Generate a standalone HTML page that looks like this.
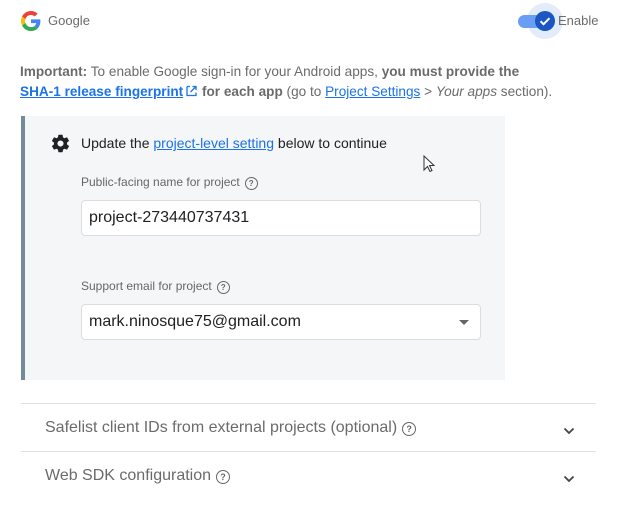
<!DOCTYPE html>
<html><head><meta charset="utf-8"><style>
body{margin:0;width:638px;height:510px;background:#fff;font-family:"Liberation Sans",sans-serif;position:relative;overflow:hidden}
.a{position:absolute;white-space:nowrap}
a{color:#1a73e8;text-decoration:underline}
.help{display:inline-block;width:11px;height:11px;border:1.3px solid #666;border-radius:50%;font-size:8px;line-height:11px;text-align:center;color:#666;vertical-align:0px;margin-left:5px;font-weight:bold}
.inp{position:absolute;left:81px;width:398px;height:34px;background:#fff;border:1px solid #dadce0;border-radius:4px;font-size:16px;color:#202124;line-height:34px;text-indent:7px}
.hr{position:absolute;left:21px;width:575px;height:1px;background:#e0e0e0}
.acc{position:absolute;left:45px;font-size:16px;color:#6b6b6b}
.chev{position:absolute;left:563px;width:12px;height:8px}
</style></head><body>
<svg class="a" style="left:21px;top:11px" width="20" height="20" viewBox="0 0 48 48"><path fill="#EA4335" d="M24 9.5c3.5 0 6.6 1.2 9.1 3.6l6.8-6.8C35.8 2.4 30.3 0 24 0 14.6 0 6.6 5.4 2.6 13.3l7.9 6.1C12.4 13.7 17.7 9.5 24 9.5z"/><path fill="#4285F4" d="M46.5 24.5c0-1.6-.1-3.1-.4-4.5H24v9h12.7c-.6 2.9-2.2 5.4-4.7 7.1l7.6 5.9c4.4-4.1 6.9-10.1 6.9-17.5z"/><path fill="#FBBC05" d="M10.5 28.6c-.5-1.4-.8-3-.8-4.6s.3-3.2.8-4.6l-7.9-6.1C.9 16.5 0 20.1 0 24s.9 7.5 2.6 10.7l7.9-6.1z"/><path fill="#34A853" d="M24 48c6.5 0 11.9-2.1 15.9-5.8l-7.6-5.9c-2.1 1.4-4.9 2.3-8.3 2.3-6.3 0-11.6-4.2-13.5-10l-7.9 6.1C6.6 42.6 14.6 48 24 48z"/></svg>
<div class="a" style="left:48px;top:13px;font-size:13px;color:#6b6b6b">Google</div>
<div class="a" style="left:527px;top:3px;width:36px;height:36px;border-radius:50%;background:#e3ecfb"></div>
<div class="a" style="left:518px;top:15px;width:28px;height:13px;border-radius:7px;background:#6a9ef5"></div>
<div class="a" style="left:535px;top:11px;width:20px;height:20px;border-radius:50%;background:#1a57c3"></div>
<svg class="a" style="left:538px;top:14px" width="14" height="14" viewBox="0 0 14 14"><path d="M2.5 7.2l3 3 6-6" stroke="#fff" stroke-width="2" fill="none"/></svg>
<div class="a" style="left:558px;top:13px;font-size:13px;color:#6b6b6b">Enable</div>
<div class="a" style="left:20px;top:62px;font-size:13.6px;color:#6b6b6b;line-height:20px"><b>Important:</b> To enable Google sign-in for your Android apps, <b>you must provide the</b><br><a href="#"><b>SHA-1 release fingerprint</b></a><svg width="13" height="12" viewBox="0 0 12 12" style="vertical-align:-1px;margin-left:2px"><path d="M1.5 1.5h3M1.5 1.5v9h9v-3M7 1.5h3.5v3.5M10.5 1.5L5 7" stroke="#1a73e8" stroke-width="1.3" fill="none"/></svg> <b>for each app</b> (go to <a href="#">Project Settings</a> &gt; <i>Your apps</i> section).</div>
<div class="a" style="left:21px;top:116px;width:480px;height:264px;background:#f5f6f7;border-left:4px solid #74899a"></div>
<svg class="a" style="left:50px;top:133px" width="21" height="21" viewBox="0 0 24 24"><path fill="#202124" d="M19.4 13c.04-.3.06-.6.06-1s-.02-.7-.07-1l2.1-1.7c.2-.15.24-.42.12-.64l-2-3.460c-.12-.22-.39-.3-.61-.22l-2.5 1c-.52-.4-1.080-.73-1.69-.98l-.38-2.65A.49.49 0 0 0 14 2h-4c-.25 0-.46.18-.49.42l-.38 2.650c-.61.25-1.17.59-1.69.98l-2.49-1c-.23-.09-.49 0-.61.22l-2 3.460c-.13.22-.07.49.12.64L4.57 11c-.04.32-.07.65-.07 1s.02.68.07 1l-2.11 1.650c-.19.15-.24.42-.12.64l2 3.460c.12.22.39.3.61.22l2.49-1c.52.4 1.080.73 1.69.98l.38 2.650c.03.24.24.42.49.42h4c.25 0 .46-.18.49-.42l.38-2.650c.61-.25 1.17-.59 1.69-.98l2.49 1c.23.09.49 0 .61-.22l2-3.460c.12-.22.07-.49-.12-.64L19.4 13zM12 15.5a3.5 3.5 0 1 1 0-7 3.5 3.5 0 0 1 0 7z"/></svg>
<div class="a" style="left:81px;top:135px;font-size:14px;color:#202124">Update the <a href="#">project-level setting</a> below to continue</div>
<div class="a" style="left:81px;top:175px;font-size:12px;color:#666">Public-facing name for project<span class="help">?</span></div>
<div class="inp" style="top:200px">project-273440737431</div>
<div class="a" style="left:81px;top:279px;font-size:12px;color:#666">Support email for project<span class="help">?</span></div>
<div class="inp" style="top:304px">mark.ninosque75@gmail.com<svg style="position:absolute;right:11px;top:15px" width="10" height="5"><path d="M0 0h10L5 5z" fill="#666"/></svg></div>
<div class="hr" style="top:403px"></div>
<div class="acc" style="top:419px">Safelist client IDs from external projects (optional)<span class="help" style="font-size:9px;width:12px;height:12px;line-height:12px">?</span></div>
<svg class="chev" style="top:427px" viewBox="0 0 12 8"><path d="M1.5 1.5l4.5 4.5 4.5-4.5" stroke="#444" stroke-width="1.8" fill="none"/></svg>
<div class="hr" style="top:451px"></div>
<div class="acc" style="top:467px">Web SDK configuration<span class="help" style="font-size:9px;width:12px;height:12px;line-height:12px">?</span></div>
<svg class="chev" style="top:475px" viewBox="0 0 12 8"><path d="M1.5 1.5l4.5 4.5 4.5-4.5" stroke="#444" stroke-width="1.8" fill="none"/></svg>
<svg class="a" style="left:423px;top:155px" width="12" height="18" viewBox="0 0 12 18"><path d="M1 1v14l3.5-3.5 2.5 5 2-1-2.5-5H11z" fill="#fff" stroke="#333" stroke-width="1"/></svg>
</body></html>
